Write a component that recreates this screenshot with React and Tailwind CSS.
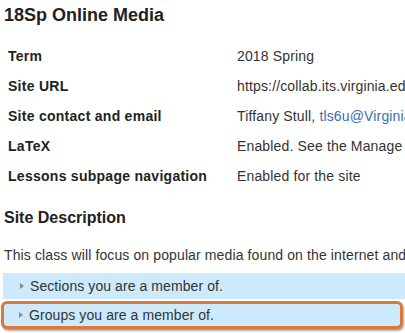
import React from "react";

function Tri() {
  return (
    <svg width="6" height="8" viewBox="0 0 6 8" className="shrink-0">
      <path d="M1 1 L5 4 L1 7 Z" fill="#8a8a8a" />
    </svg>
  );
}

const rows = [
  ["Term", "2018 Spring"],
  ["Site URL", "https://collab.its.virginia.edu/portal/site/18sp-online-media"],
  ["Site contact and email", null],
  ["LaTeX", "Enabled. See the Manage Tools page for more details"],
  ["Lessons subpage navigation", "Enabled for the site"],
];

export default function App() {
  return (
    <div className="w-[405px] h-[333px] overflow-hidden bg-white text-[#333] whitespace-nowrap" style={{ fontFamily: '"Liberation Sans", Arial, sans-serif' }}>
      <div className="pl-1 pt-[2px]">
        <h1 className="text-[18px] leading-[26px] font-bold text-[#222]">18Sp Online Media</h1>
        <div className="mt-[13px] text-[14px]">
          {rows.map(([k, v]) => (
            <div key={k} className="flex h-[30px] items-center">
              <div className="w-[233px] shrink-0 pl-1 font-bold text-[#222] tracking-[0.27px]">{k}</div>
              <div className="shrink-0 tracking-[0.15px]">
                {v ?? (
                  <>
                    Tiffany Stull, <span className="text-[#3b6eb4]">tls6u@Virginia.edu</span>
                  </>
                )}
              </div>
            </div>
          ))}
        </div>
        <h2 className="mt-[16px] text-[16px] leading-[22px] font-bold text-[#222]">Site Description</h2>
        <p className="mt-[16px] text-[14px] leading-[20px] tracking-[0.12px]">This class will focus on popular media found on the internet and beyond.</p>
        <div className="mt-[8px] -ml-[1px]">
          <div className="h-[26px] bg-[#cdeafc] flex items-center gap-[5px] pl-[16px] text-[14px] tracking-[0.08px]">
            <Tri />
            <span>Sections you are a member of.</span>
          </div>
          <div className="mt-[2px] -ml-[2px] mr-[2px] h-[28px] bg-[#cdeafc] border-[3px] border-[#d9783a] rounded-[6px] shadow-[1px_2px_2px_rgba(0,0,0,0.35)] flex items-center gap-[5px] pl-[14px] text-[14px] tracking-[0.08px]">
            <Tri />
            <span>Groups you are a member of.</span>
          </div>
        </div>
      </div>
    </div>
  );
}
